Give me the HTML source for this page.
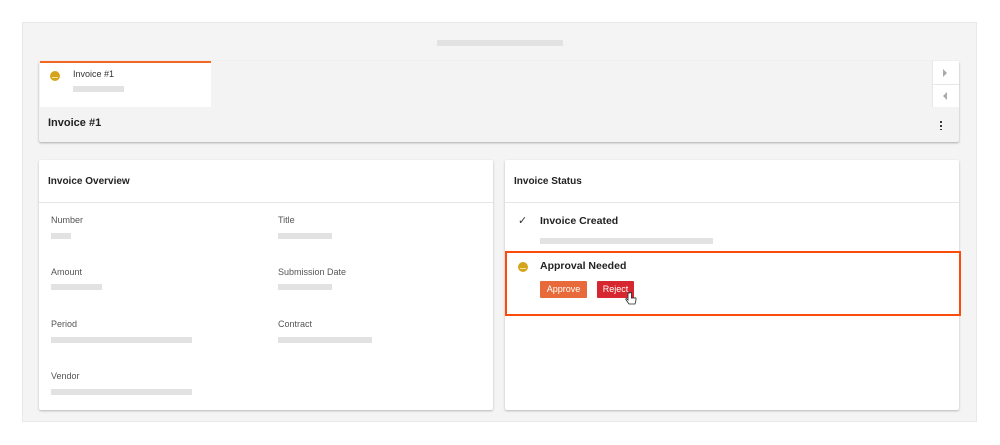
<!DOCTYPE html>
<html><head><style>
*{margin:0;padding:0;box-sizing:border-box}
body{width:1000px;height:445px;background:#fff;font-family:"Liberation Sans",sans-serif;position:relative;overflow:hidden;color:#222}
.a{position:absolute}
.bar{position:absolute;background:#e2e2e2;height:6px}
.lbl{position:absolute;font-size:9px;color:#555}
.card{position:absolute;background:#fff;box-shadow:0 1px 2px rgba(0,0,0,.25);border-radius:2px}
.h{position:absolute;font-size:10.5px;font-weight:bold;color:#222}
.dot{position:absolute;width:10px;height:10px;border-radius:50%;background:#d4a51c}
.dot:after{content:"";position:absolute;left:2px;top:4px;width:6px;height:2px;border-bottom:1px solid #f6e3a0}
</style></head><body>
<div class="a" style="left:22px;top:22px;width:955px;height:400px;background:#f4f4f4;border:1px solid #e8e8e8"></div>
<div class="bar" style="left:437px;top:40px;width:126px;height:6px"></div>
<div class="a" style="left:39px;top:61px;width:920px;height:81px;background:#f3f3f3;box-shadow:0 1px 2px rgba(0,0,0,.3);border-radius:2px"></div>
<div class="a" style="left:40px;top:61px;width:171px;height:46px;background:#fff;border-top:2px solid #f26722"></div>
<div class="dot" style="left:50px;top:71px"></div>
<div class="lbl" style="left:73px;top:69px;color:#333">Invoice #1</div>
<div class="bar" style="left:73px;top:86px;width:51px"></div>
<div class="a" style="left:932px;top:61px;width:27px;height:46px;background:#e6e6e6"></div>
<div class="a" style="left:933px;top:61px;width:26px;height:23px;background:#fff"></div>
<div class="a" style="left:933px;top:85px;width:26px;height:22px;background:#fff"></div>
<div class="a" style="left:943px;top:69px;border-left:4px solid #aaa;border-top:4px solid transparent;border-bottom:4px solid transparent"></div>
<div class="a" style="left:943px;top:92px;border-right:4px solid #aaa;border-top:4px solid transparent;border-bottom:4px solid transparent"></div>
<div class="h" style="left:48px;top:117px;font-size:11px">Invoice #1</div>
<div class="a" style="left:940px;top:120px;width:2px;height:10px;background:radial-gradient(circle,#222 45%,transparent 50%) 0 0/2px 4px"></div>

<div class="card" style="left:39px;top:160px;width:454px;height:250px"></div>
<div class="h" style="left:48px;top:176px;font-size:10px">Invoice Overview</div>
<div class="a" style="left:39px;top:202px;width:454px;height:1px;background:#e6e6e6"></div>
<div class="lbl" style="left:51px;top:215px">Number</div><div class="bar" style="left:51px;top:233px;width:20px"></div>
<div class="lbl" style="left:278px;top:215px">Title</div><div class="bar" style="left:278px;top:233px;width:54px"></div>
<div class="lbl" style="left:51px;top:267px">Amount</div><div class="bar" style="left:51px;top:284px;width:51px"></div>
<div class="lbl" style="left:278px;top:267px">Submission Date</div><div class="bar" style="left:278px;top:284px;width:54px"></div>
<div class="lbl" style="left:51px;top:319px">Period</div><div class="bar" style="left:51px;top:337px;width:141px"></div>
<div class="lbl" style="left:278px;top:319px">Contract</div><div class="bar" style="left:278px;top:337px;width:94px"></div>
<div class="lbl" style="left:51px;top:371px">Vendor</div><div class="bar" style="left:51px;top:389px;width:141px"></div>

<div class="card" style="left:505px;top:160px;width:454px;height:250px"></div>
<div class="h" style="left:514px;top:176px;font-size:10px">Invoice Status</div>
<div class="a" style="left:505px;top:202px;width:454px;height:1px;background:#e6e6e6"></div>
<div class="a" style="left:518px;top:214px;font-size:11px;color:#333">✓</div>
<div class="h" style="left:540px;top:215px">Invoice Created</div>
<div class="bar" style="left:540px;top:238px;width:173px"></div>
<div class="a" style="left:505px;top:251px;width:456px;height:65px;border:2px solid #fc4c0c"></div>
<div class="dot" style="left:518px;top:262px"></div>
<div class="h" style="left:540px;top:260px">Approval Needed</div>
<div class="a" style="left:540px;top:281px;width:47px;height:17px;background:#e8693a;color:#fff;font-size:9px;text-align:center;line-height:17px;border-radius:1px">Approve</div>
<div class="a" style="left:597px;top:281px;width:37px;height:17px;background:#d6262f;color:#fff;font-size:9px;text-align:center;line-height:17px;border-radius:1px">Reject</div>
<svg class="a" style="left:625px;top:292px" width="12" height="14" viewBox="0 0 12 14"><path d="M3 1v7l-1.5-1.5c-1 0-1 1 0 2L4 12h6l1-4V6.5c0-1-1.5-1-1.5 0 0-1-1.5-1-1.5 0 0-1-1.5-1-1.5 0V1c0-1-1.5-1-1.5 0z" fill="#fff" stroke="#222" stroke-width=".8"/></svg>
</body></html>
